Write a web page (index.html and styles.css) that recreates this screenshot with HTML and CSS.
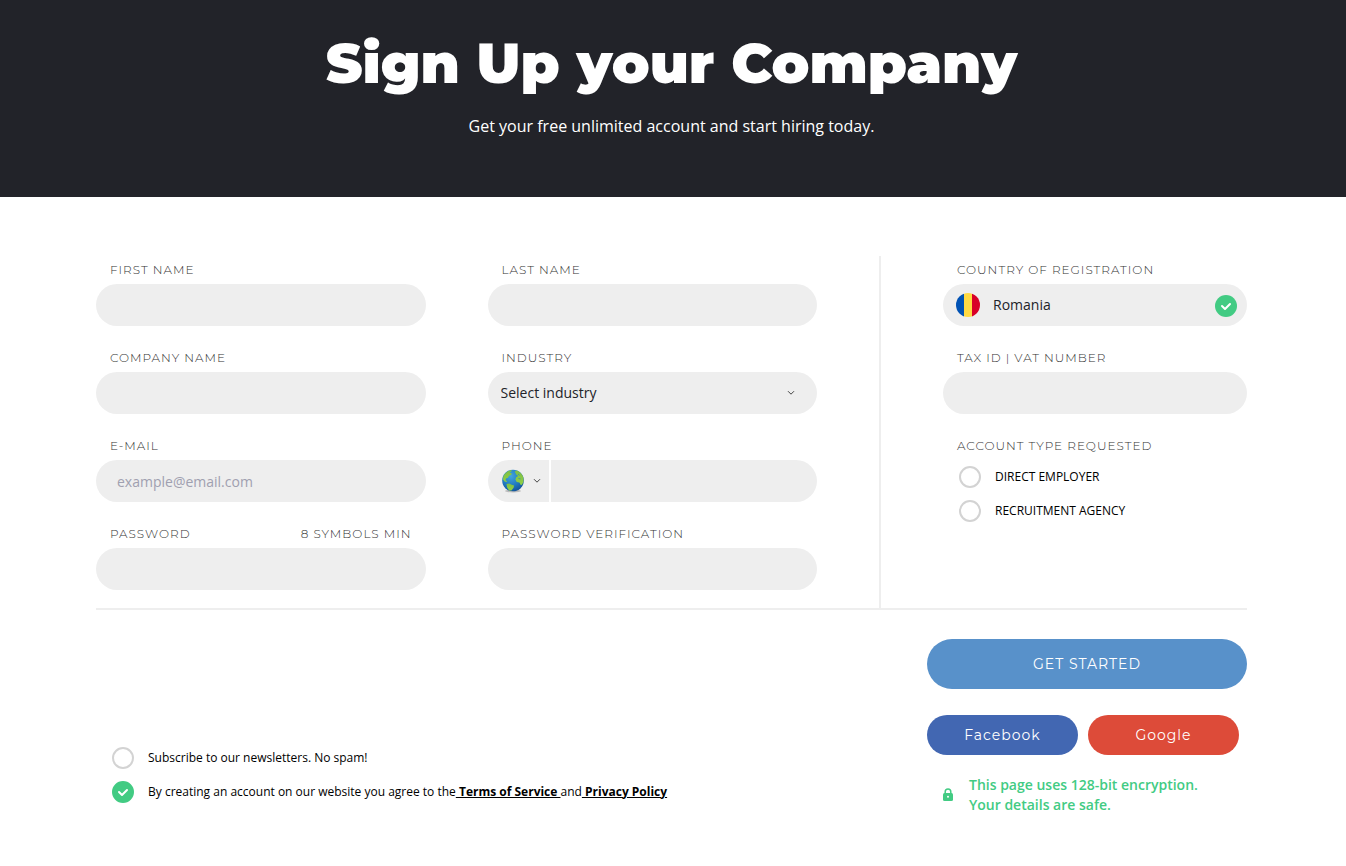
FILE: index.html
```html
<!DOCTYPE html>
<html lang="en">
<head>
<meta charset="utf-8">
<meta name="viewport" content="width=device-width, initial-scale=1">
<title>Sign Up your Company</title>
<link rel="stylesheet" href="styles.css">
</head>
<body>
<header class="hero">
  <h1 class="hero-title">Sign Up your Company</h1>
  <p class="hero-text">Get your free unlimited account and start hiring today.</p>
</header>
<main>
<form class="signup">
  <div class="details">
    <div class="personal">
      <div class="field">
        <label class="label" for="first">FIRST NAME</label>
        <input class="control" id="first" type="text">
      </div>
      <div class="field">
        <label class="label" for="last">LAST NAME</label>
        <input class="control" id="last" type="text">
      </div>
      <div class="field">
        <label class="label" for="company">COMPANY NAME</label>
        <input class="control" id="company" type="text">
      </div>
      <div class="field">
        <label class="label" for="industry">INDUSTRY</label>
        <div class="control-wrap">
          <select class="control industry" id="industry"><option>Select industry</option></select>
          <svg class="chevron industry-chevron" viewBox="0 0 8 6" aria-hidden="true"><path d="M1 1.2 4 4.2 7 1.2"/></svg>
        </div>
      </div>
      <div class="field">
        <label class="label" for="email">E-MAIL</label>
        <input class="control" id="email" type="email" placeholder="example@email.com">
      </div>
      <div class="field">
        <label class="label" for="phone">PHONE</label>
        <div class="phone">
          <button class="phone-code" type="button" aria-label="Country code">
            <svg class="globe" viewBox="0 0 24 24" aria-hidden="true">
              <defs>
                <radialGradient id="sea" cx=".4" cy=".3" r=".75"><stop offset="0" stop-color="#43a5dc"/><stop offset=".6" stop-color="#2079bf"/><stop offset="1" stop-color="#125096"/></radialGradient>
                <linearGradient id="land" x1="0" y1="0" x2="0" y2="1"><stop offset="0" stop-color="#7fbf45"/><stop offset="1" stop-color="#8fd046"/></linearGradient>
              </defs>
              <ellipse cx="12" cy="22" rx="8" ry="1.4" fill="#bbb"/>
              <circle cx="12" cy="11.5" r="10.8" fill="url(#sea)"/>
              <g fill="url(#land)">
                <path d="M2.400 7.200C4 3.700 7 1.600 10.700 1l-.5 1.700-2 .8 2.500.8-.4 1.700-2.300.8-1 2-2 .8-.4 1.600 1.400 1.100-.4.800-2-.7-1.600-2z"/>
                <path d="m5.500 15 2.800-.5 2.400 1.300 2.400.8-.5 2.200-2.200 2.600-2.300.100-2-3z"/>
                <path d="m13.700 2.600 2.300-1c3 1.300 5.300 3.900 6.400 7l.1 4.200-1.500 3-1.300.3-1.300-2.600-2.700-.6-1.300-2.500.9-2.500 1.900-1-2-1.500z"/>
              </g>
              <path d="m17 5 1.600 1.400M17.500 9.500l2 .4" stroke="#2b86c6" stroke-width=".8" fill="none"/>
            </svg>
            <svg class="chevron" viewBox="0 0 8 6" aria-hidden="true"><path d="M1 1.2 4 4.2 7 1.2"/></svg>
          </button>
          <input class="control phone-number" id="phone" type="tel">
        </div>
      </div>
      <div class="field">
        <div class="label-row"><label class="label" for="password">PASSWORD</label><span class="label" id="hint">8 SYMBOLS MIN</span></div>
        <input class="control" id="password" type="password" aria-describedby="hint">
      </div>
      <div class="field">
        <label class="label" for="verify">PASSWORD VERIFICATION</label>
        <input class="control" id="verify" type="password">
      </div>
    </div>
    <div class="business">
      <div class="field">
        <label class="label" for="country">COUNTRY OF REGISTRATION</label>
        <div class="control-wrap">
          <select class="control country" id="country"><option>Romania</option></select>
          <svg class="flag" viewBox="0 0 24 24" aria-hidden="true">
            <clipPath id="round"><circle cx="12" cy="12" r="12"/></clipPath>
            <g clip-path="url(#round)"><path fill="#0052b4" d="M0 0h8v24H0z"/><path fill="#ffda44" d="M8 0h8v24H8z"/><path fill="#d80027" d="M16 0h8v24h-8z"/></g>
          </svg>
          <svg class="valid" viewBox="0 0 22 22" aria-hidden="true"><circle cx="11" cy="11" r="11" fill="#42cb83"/><path class="tick" d="m7 11 3 3 5-5"/></svg>
        </div>
      </div>
      <div class="field">
        <label class="label" for="tax">TAX ID | VAT NUMBER</label>
        <input class="control" id="tax" type="text">
      </div>
      <fieldset class="account">
        <legend class="label">ACCOUNT TYPE REQUESTED</legend>
        <label class="choice"><input class="mark" type="radio" name="account"><span class="choice-text">DIRECT EMPLOYER</span></label>
        <label class="choice"><input class="mark" type="radio" name="account"><span class="choice-text">RECRUITMENT AGENCY</span></label>
      </fieldset>
    </div>
  </div>
  <div class="finish">
    <div class="consents">
      <label class="choice"><input class="mark" type="checkbox"><span class="choice-text">Subscribe to our newsletters. No spam!</span></label>
      <div class="choice">
        <span class="mark-wrap">
          <input class="mark" id="terms" type="checkbox" checked>
          <svg class="mark-tick" viewBox="0 0 22 22" aria-hidden="true"><path class="tick" d="m7 11 3 3 5-5"/></svg>
        </span>
        <label class="choice-text" for="terms">By creating an account on our website you agree to the<a class="link" href="#terms-of-service">&nbsp;Terms of Service </a>and<a class="link" href="#privacy">&nbsp;Privacy Policy</a></label>
      </div>
    </div>
    <div class="actions">
      <button class="button start" type="submit">GET STARTED</button>
      <div class="social">
        <button class="button facebook" type="button">Facebook</button>
        <button class="button google" type="button">Google</button>
      </div>
      <div class="secure">
        <svg class="lock" viewBox="0 0 12 14" aria-hidden="true"><path d="M3.200 6V3.800a2.800 2.800 0 0 1 5.600 0V6" fill="none" stroke="#42cb83" stroke-width="1.500"/><rect x="1" y="5" width="10" height="8" rx="1.500" fill="#42cb83"/><circle cx="6" cy="8.800" r="1" fill="#fff"/></svg>
        <p class="secure-text">This page uses 128-bit encryption.<br>Your details are safe.</p>
      </div>
    </div>
  </div>
</form>
</main>
</body>
</html>
```
FILE: styles.css
```css
* { box-sizing: border-box; }
body {
  margin: 0;
  background: #fff;
  color: #000;
  font-family: "Open Sans", sans-serif;
  font-size: 12px;
}
.hero {
  padding: 27px 99px 57px 96px;
  background: #222329;
  color: #fff;
  text-align: center;
}
.hero-title {
  margin: 0;
  font: 900 56px/72px Montserrat, Inter, sans-serif;
}
.hero-text { margin: 14px 0 0; font-size: 16px; line-height: 27px; }
.signup { padding: 59px 99px 51px 96px; }
.details {
  display: grid;
  grid-template-columns: minmax(0, 1fr) 366px;
  border-bottom: 2px solid #eee;
}
.personal {
  display: grid;
  grid-template-columns: 1fr 1fr;
  gap: 18px 62px;
  padding: 0 62px 18px 0;
  border-right: 2px solid #eee;
}
.business {
  display: flex;
  flex-direction: column;
  gap: 18px;
  padding-left: 62px;
}
.field { min-width: 0; }
.label {
  display: block;
  padding: 0 14px;
  color: #333;
  font: 300 12px/28px Montserrat, Inter, sans-serif;
  letter-spacing: 1px;
}
.label-row { display: flex; justify-content: space-between; }
.control {
  display: block;
  width: 100%;
  height: 42px;
  padding: 0 21px;
  border: 0;
  border-radius: 21px;
  background: #eee;
  color: #222329;
  font: 14px "Open Sans", sans-serif;
  appearance: none;
}
.control::placeholder { color: #a0a0b0; opacity: 1; }
.control-wrap { position: relative; }
.industry { padding: 0 40px 2px 13px; }
.country { padding: 0 40px 2px 50px; }
.chevron {
  width: 8px;
  height: 6px;
  fill: none;
  stroke: #444;
  stroke-width: 1;
}
.industry-chevron { position: absolute; top: 18px; right: 22px; }
.flag { position: absolute; top: 9px; left: 13px; width: 24px; height: 24px; }
.valid { position: absolute; top: 11px; right: 10px; width: 22px; height: 22px; }
.tick {
  fill: none;
  stroke: #fff;
  stroke-width: 2;
  stroke-linecap: round;
  stroke-linejoin: round;
}
.phone { display: flex; gap: 2px; }
.phone-code {
  display: flex;
  align-items: center;
  gap: 8px;
  width: 61px;
  padding: 0 0 0 13px;
  border: 0;
  border-radius: 21px 0 0 21px;
  background: #eee;
}
.globe { width: 24px; height: 24px; }
.phone-number { flex: 1; min-width: 0; border-radius: 0 21px 21px 0; }
.account { margin: 0; padding: 0; border: 0; }
.account .label { padding: 0 14px; }
.choice {
  display: flex;
  align-items: center;
  gap: 14px;
  height: 34px;
  padding-left: 16px;
}
.choice-text { padding-bottom: 2px; }
.mark {
  flex: none;
  display: block;
  width: 22px;
  height: 22px;
  margin: 0;
  border: 2px solid #d3d3d3;
  border-radius: 50%;
  background: #fff;
  appearance: none;
}
.mark:checked { border-color: #42cb83; background: #42cb83; }
.mark-wrap { position: relative; }
.mark-tick { position: absolute; inset: 0; pointer-events: none; }
.link { color: #000; font-weight: 700; }
.finish {
  display: flex;
  justify-content: space-between;
  align-items: flex-end;
  padding-top: 29px;
}
.consents { padding-bottom: 6px; }
.actions { width: 320px; }
.button {
  border: 0;
  border-radius: 25px;
  color: #fff;
  font: 400 14px Montserrat, Inter, sans-serif;
  letter-spacing: 1px;
}
.start { width: 100%; height: 50px; background: #5891ca; }
.social {
  display: grid;
  grid-template-columns: 1fr 1fr;
  gap: 10px;
  padding: 26px 8px 20px 0;
}
.social .button { height: 40px; }
.facebook { background: #4267b2; }
.google { background: #dd4b39; }
.secure { display: flex; align-items: center; gap: 15px; padding-left: 15px; }
.lock { width: 12px; height: 14px; }
.secure-text {
  margin: 0;
  color: #42cb83;
  font-size: 14px;
  font-weight: 600;
  line-height: 20px;
}
```
